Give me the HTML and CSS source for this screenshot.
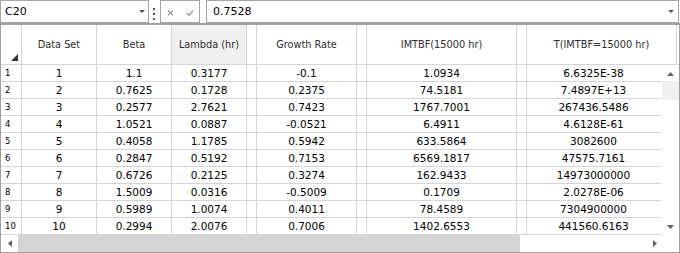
FILE: index.html
```html
<!DOCTYPE html>
<html>
<head>
<meta charset="utf-8">
<link rel="stylesheet" href="styles.css">
</head>
<body>
<div class="app">
  <div class="toolbar">
    <div class="namebox"><span class="nb-text">C20</span><span class="caret"></span></div>
    <div class="grip"><i></i><i></i><i></i></div>
    <div class="actions">
      <svg width="38" height="21" viewBox="0 0 38 21"><path d="M7 9.3l5 5M12 9.3l-5 5" stroke="#8c8c8c" stroke-width="1.2" fill="none"/><path d="M26 12l2.2 2.3 3.8-4.6" stroke="#8c8c8c" stroke-width="1.2" fill="none"/></svg>
    </div>
    <div class="formula"><span class="f-text">0.7528</span><span class="caret"></span></div>
  </div>
  <div class="sheet">
    <div class="row head">
      <div class="cell corner"><span class="tri"></span></div>
      <div class="cell">Data Set</div>
      <div class="cell">Beta</div>
      <div class="cell sel">Lambda (hr)</div>
      <div class="cell"></div>
      <div class="cell">Growth Rate</div>
      <div class="cell"></div>
      <div class="cell">IMTBF(15000 hr)</div>
      <div class="cell"></div>
      <div class="cell">T(IMTBF=15000 hr)</div>
      <div class="fill"></div>
    </div>
    <div class="body">
      <div class="row"><div class="cell rn">1</div><div class="cell">1</div><div class="cell">1.1</div><div class="cell">0.3177</div><div class="cell"></div><div class="cell">-0.1</div><div class="cell"></div><div class="cell">1.0934</div><div class="cell"></div><div class="cell last">6.6325E-38</div><div class="fill"></div></div>
      <div class="row"><div class="cell rn">2</div><div class="cell">2</div><div class="cell">0.7625</div><div class="cell">0.1728</div><div class="cell"></div><div class="cell">0.2375</div><div class="cell"></div><div class="cell">74.5181</div><div class="cell"></div><div class="cell last">7.4897E+13</div><div class="fill"></div></div>
      <div class="row"><div class="cell rn">3</div><div class="cell">3</div><div class="cell">0.2577</div><div class="cell">2.7621</div><div class="cell"></div><div class="cell">0.7423</div><div class="cell"></div><div class="cell">1767.7001</div><div class="cell"></div><div class="cell last">267436.5486</div><div class="fill"></div></div>
      <div class="row"><div class="cell rn">4</div><div class="cell">4</div><div class="cell">1.0521</div><div class="cell">0.0887</div><div class="cell"></div><div class="cell">-0.0521</div><div class="cell"></div><div class="cell">6.4911</div><div class="cell"></div><div class="cell last">4.6128E-61</div><div class="fill"></div></div>
      <div class="row"><div class="cell rn">5</div><div class="cell">5</div><div class="cell">0.4058</div><div class="cell">1.1785</div><div class="cell"></div><div class="cell">0.5942</div><div class="cell"></div><div class="cell">633.5864</div><div class="cell"></div><div class="cell last">3082600</div><div class="fill"></div></div>
      <div class="row"><div class="cell rn">6</div><div class="cell">6</div><div class="cell">0.2847</div><div class="cell">0.5192</div><div class="cell"></div><div class="cell">0.7153</div><div class="cell"></div><div class="cell">6569.1817</div><div class="cell"></div><div class="cell last">47575.7161</div><div class="fill"></div></div>
      <div class="row"><div class="cell rn">7</div><div class="cell">7</div><div class="cell">0.6726</div><div class="cell">0.2125</div><div class="cell"></div><div class="cell">0.3274</div><div class="cell"></div><div class="cell">162.9433</div><div class="cell"></div><div class="cell last">14973000000</div><div class="fill"></div></div>
      <div class="row"><div class="cell rn">8</div><div class="cell">8</div><div class="cell">1.5009</div><div class="cell">0.0316</div><div class="cell"></div><div class="cell">-0.5009</div><div class="cell"></div><div class="cell">0.1709</div><div class="cell"></div><div class="cell last">2.0278E-06</div><div class="fill"></div></div>
      <div class="row"><div class="cell rn">9</div><div class="cell">9</div><div class="cell">0.5989</div><div class="cell">1.0074</div><div class="cell"></div><div class="cell">0.4011</div><div class="cell"></div><div class="cell">78.4589</div><div class="cell"></div><div class="cell last">7304900000</div><div class="fill"></div></div>
      <div class="row"><div class="cell rn">10</div><div class="cell">10</div><div class="cell">0.2994</div><div class="cell">2.0076</div><div class="cell"></div><div class="cell">0.7006</div><div class="cell"></div><div class="cell">1402.6553</div><div class="cell"></div><div class="cell last">441560.6163</div><div class="fill"></div></div>
      <div class="vscroll">
        <svg class="arr-up" width="7" height="4" viewBox="0 0 7 4"><path d="M0 4L3.5 0L7 4z" fill="#606060"/></svg>
        <div class="vthumb"></div>
        <svg class="arr-down" width="7" height="4" viewBox="0 0 7 4"><path d="M0 0L3.5 4L7 0z" fill="#606060"/></svg>
      </div>
    </div>
    <div class="hscroll">
      <div class="hs-btn"><svg width="4" height="7" viewBox="0 0 4 7"><path d="M4 0L0 3.5L4 7z" fill="#606060"/></svg></div>
      <div class="hs-thumb"></div>
      <div class="hs-track"></div>
      <div class="hs-btn right"><svg width="4" height="7" viewBox="0 0 4 7"><path d="M0 0L4 3.5L0 7z" fill="#606060"/></svg></div>
      <div class="hs-corner"></div>
    </div>
  </div>
</div>
</body>
</html>
```

FILE: styles.css
```css
* { box-sizing: border-box; }
html, body { margin: 0; padding: 0; background: #ffffff; }
body { font-family: "DejaVu Sans", sans-serif; color: #000; }

.app { width: 680px; height: 253px; overflow: hidden; }

.toolbar { display: flex; height: 23px; align-items: stretch; }
.namebox {
  width: 149px; height: 23px; border: 1px solid #a6a6a6;
  display: flex; align-items: center; justify-content: space-between;
  padding: 0 3px 0 4px; font-size: 11px; line-height: 21px;
}
.caret {
  width: 0; height: 0;
  border-left: 3px solid transparent; border-right: 3px solid transparent;
  border-top: 3px solid #555;
}
.grip { margin-left: 4px; width: 2px; display: flex; flex-direction: column; gap: 3px; padding-top: 8px; }
.grip i { display: block; width: 2px; height: 2px; background: #555; }
.actions { margin-left: 5px; width: 40px; height: 23px; border: 1px solid #a6a6a6; }
.actions svg { display: block; }
.formula {
  margin-left: 6px; width: 473px; height: 23px; border: 1px solid #a6a6a6;
  display: flex; align-items: center; justify-content: space-between;
  padding: 0 4px 0 6px; font-size: 11px; line-height: 21px;
}

.sheet {
  width: 680px; height: 230px;
  border: 1px solid #a0a0a0; border-top-width: 2px;
}
.row {
  display: grid;
  grid-template-columns: 21px 75px 75px 75px 10px 100px 10px 150px 10px 150px 1fr;
  height: 17px; border-bottom: 1px solid #d5d5d5;
}
.row.head { height: 40px; }
.cell {
  border-right: 1px solid #d5d5d5;
  display: flex; align-items: center; justify-content: center;
  white-space: nowrap; font-size: 10.5px; color: #000;
}
.head .cell { font-size: 9.75px; color: #2e2e2e; }
.head .cell.sel { background: #f0f0f0; }
.head .corner { align-items: flex-end; justify-content: flex-end; padding: 0 3px 3px 0; }
.tri {
  width: 0; height: 0;
  border-left: 7px solid transparent; border-bottom: 7px solid #333;
}
.cell.rn { justify-content: flex-start; padding-left: 4px; font-size: 8.5px; }
.cell.last { padding-right: 16px; }

.body { position: relative; }
.vscroll {
  position: absolute; top: 0; right: 0; width: 18px; height: 170px;
  background: #fff;
}
.arr-up { position: absolute; left: 6px; top: 7px; }
.arr-down { position: absolute; left: 6px; top: 160px; }
.vthumb { position: absolute; left: 1px; top: 16px; width: 17px; height: 19px; background: #f0f0f0; }

.hscroll { display: flex; height: 17px; }
.hs-btn { width: 17px; display: flex; align-items: center; justify-content: center; }
.hs-btn.right { justify-content: flex-end; padding-right: 4px; }
.hs-btn svg { display: block; }
.hs-thumb { width: 502px; background: #d4d4d4; }
.hs-track { flex: 1; }
.hs-corner { width: 18px; }
```
